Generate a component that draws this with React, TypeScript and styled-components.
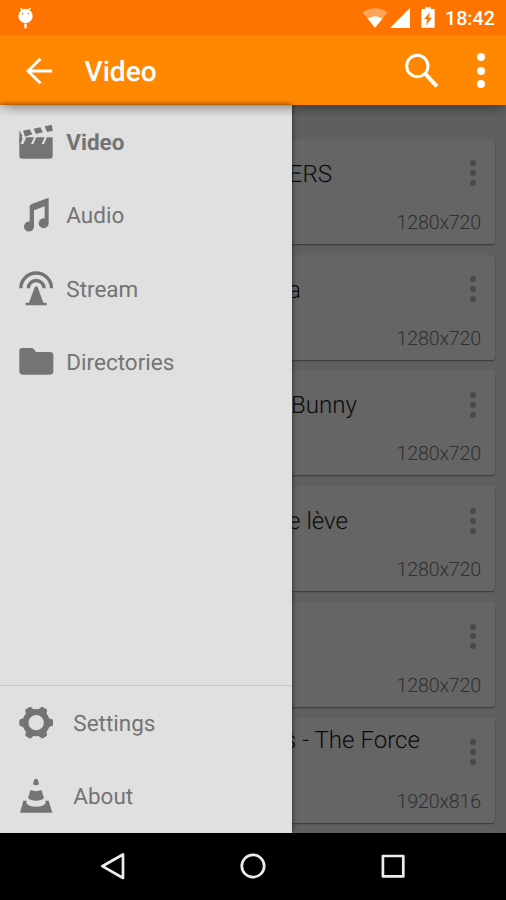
import React from "react";
import styled, { createGlobalStyle } from "styled-components";

const GlobalStyle = createGlobalStyle`
  *, *::before, *::after { box-sizing: border-box; }
  body { margin: 0; font-family: Roboto, "Noto Sans", sans-serif; background: #000; text-rendering: geometricPrecision; }
  svg { display: block; flex: none; }
`;

const Screen = styled.div`
  width: 506px;
  height: 900px;
  display: flex;
  flex-direction: column;
  overflow: hidden;
`;

const StatusBar = styled.header`
  height: 35px;
  flex: none;
  display: flex;
  align-items: center;
  padding: 0 11px 0 17px;
  background: #ff7300;
  color: #fff;
`;

const StatusIcons = styled.div`
  display: flex;
  align-items: center;
  margin-left: auto;
`;

const Clock = styled.span`
  width: 50px;
  margin-left: 10px;
  padding-top: 2px;
  font-size: 19.68px;
  line-height: 23px;
  font-weight: 500;
  white-space: nowrap;
`;

const Toolbar = styled.div`
  height: 70.4px;
  flex: none;
  display: flex;
  align-items: center;
  padding: 1px 21px 0 25px;
  background: #ff8800;
  color: #fff;
`;

const ToolbarTitle = styled.h1`
  margin: 2px auto 0 31.5px;
  font-size: 28.1px;
  line-height: 32px;
  font-weight: 500;
`;

const ToolbarActions = styled.div`
  display: flex;
  align-items: center;
  gap: 37px;
`;

const Content = styled.main`
  position: relative;
  flex: 1;
  min-height: 0;
  display: flex;
  background: #5f5f5f;

  &::after {
    content: "";
    position: absolute;
    inset: 0 0 auto 0;
    z-index: 2;
    height: 12px;
    background: linear-gradient(rgba(0, 0, 0, 0.3), rgba(0, 0, 0, 0.12) 45%, transparent);
    -webkit-mask-image: linear-gradient(90deg, rgba(0, 0, 0, 0.4), #000 14px, #000 calc(100% - 14px), rgba(0, 0, 0, 0.4));
    pointer-events: none;
  }
`;

const Drawer = styled.nav`
  width: 292.4px;
  flex: none;
  display: flex;
  flex-direction: column;
  justify-content: space-between;
  background: #e0e0e0;
  box-shadow: 0 0 5px rgba(0, 0, 0, 0.65);
  z-index: 1;
`;

const DrawerGroup = styled.div<{ $divided?: boolean }>`
  border-top: ${(p) => (p.$divided ? "1px solid #c8c8c8" : "0")};
`;

const DrawerItem = styled.a<{ $active?: boolean; $gap: number }>`
  height: 73.3px;
  display: flex;
  align-items: center;
  gap: ${(p) => p.$gap}px;
  padding-left: 18.3px;
  color: #747474;
  font-size: 22.5px;
  line-height: 28px;
  font-weight: ${(p) => (p.$active ? 700 : 400)};

  span {
    padding-top: 2px;
  }
`;

const VideoList = styled.section`
  flex: 1;
  min-width: 0;
  display: flex;
  flex-direction: column;
  gap: 10.8px;
  padding: 33.4px 11px 0 0;
  overflow: hidden;
`;

const VideoCard = styled.article`
  height: 105px;
  flex: none;
  display: flex;
  flex-direction: column;
  justify-content: space-between;
  background: #656565;
  border-radius: 0 3px 3px 0;
  box-shadow: 0 1px 1.5px rgba(0, 0, 0, 0.4);
`;

const CardHead = styled.div`
  height: 69px;
  display: flex;
  justify-content: flex-end;
  align-items: center;
  padding-right: 19px;
`;

const CardTitle = styled.h2<{ $end: number; $raised?: boolean }>`
  flex: 1;
  min-width: 0;
  display: flex;
  justify-content: flex-end;
  margin: ${(p) => (p.$raised ? "-25px" : "1px")} ${(p) => p.$end}px 0 0;
  color: #0b0b0b;
  font-size: 24.1px;
  line-height: 30px;
  font-weight: 300;
  white-space: nowrap;
`;

const Resolution = styled.span`
  align-self: flex-end;
  margin: 0 14px 9px 0;
  color: #303030;
  font-size: 19.68px;
  line-height: 25px;
  font-weight: 300;
  letter-spacing: -0.18px;
`;

const NavigationBar = styled.footer`
  height: 67.5px;
  flex: none;
  display: flex;
  align-items: center;
  justify-content: space-between;
  padding: 0 99px;
  background: #000;
`;

const VideoIcon = () => (
  <svg width="36" height="36" viewBox="0 0 108 108" fill="currentColor">
    <path d="M4 19l9 16-7 20H4zM15 20l20-4 8 15-22 7zM47 14l20-4 8 15-21 5zM80 7l21-5 4 18-18 4z" />
    <path d="M4 42h10l-6 18h8l9-20h23l-9 20h7l9-20h25l-9 20h7l9-20h17v55q0 9-9 9H13q-9 0-9-9z" />
  </svg>
);

const AudioIcon = () => (
  <svg width="36" height="36" viewBox="0 0 108 108" fill="currentColor">
    <path d="M35 29q0-6 6-8L92 2v76a15 15 0 1 1-12-14V28L48 40v49a15 15 0 1 1-13-15z" />
  </svg>
);

const StreamIcon = () => (
  <svg width="36" height="36" viewBox="0 0 108 108" fill="currentColor">
    <path d="M8.5 52a46 46 0 0 1 92 0M31 52a23.5 23.5 0 0 1 47 0" fill="none" stroke="currentColor" strokeWidth="10" />
    <path d="M50 49q4.5-6 9 0l17 46h10v8H23v-8h10z" />
  </svg>
);

const FolderIcon = () => (
  <svg width="36" height="36" viewBox="0 0 108 108" fill="currentColor">
    <path d="M12 12h28q5 0 7 3l7 9h42q10 0 10 10v48q0 10-10 10H14Q4 92 4 82V22q0-10 8-10z" />
  </svg>
);

const GEAR_TEETH = [0, 60, 120, 180, 240, 300];

const SettingsIcon = () => (
  <svg width="36" height="36" viewBox="0 0 108 108">
    <circle cx="54.5" cy="53" r="32" fill="none" stroke="currentColor" strokeWidth="18" />
    {GEAR_TEETH.map((angle) => (
      <path key={angle} transform={`rotate(${angle} 54.5 53)`} d="M84 31q6 9 15 11 6 1 6 4v14q0 3-6 4-9 2-15 11z" fill="currentColor" />
    ))}
  </svg>
);

const ConeIcon = () => (
  <svg width="36" height="36" viewBox="0 0 108 108" fill="currentColor">
    <path d="M45 18l3-11q2-5 6-5t6 5l3 11q-2 4-9 4t-9-4zM38 36q16 7 32 0l8 24q-8 8-24 8t-24-8zM16 68h10l-1 7q5 11 29 11t29-11l-1-7h10l11 36H6z" />
  </svg>
);

const BackArrow = () => (
  <svg width="28" height="28" viewBox="0 0 28 28" fill="none" stroke="currentColor" strokeWidth="2.8">
    <path d="M27 14H3M15.5 1.8L3 14l12.5 12.2" />
  </svg>
);

const SearchIcon = () => (
  <svg width="36" height="36" viewBox="0 0 108 108" fill="none" stroke="currentColor">
    <circle cx="40" cy="39" r="32" strokeWidth="9" />
    <path d="M63 62l36 38" strokeWidth="12" />
  </svg>
);

const Dots = styled.div<{ $size: number; $gap: number }>`
  display: flex;
  flex-direction: column;
  gap: ${(p) => p.$gap}px;

  i {
    width: ${(p) => p.$size}px;
    height: ${(p) => p.$size}px;
    border-radius: 50%;
    background: currentColor;
  }
`;

const CardMenu = styled(Dots)`
  color: #494949;
`;

const DebugIcon = () => (
  <svg width="17" height="22" viewBox="0 0 51 66">
    <path d="M11 3l7 9M40 3l-7 9" stroke="#fff" strokeWidth="4" fill="none" />
    <path d="M22 50h7v14h-7z" fill="#fff" />
    <circle cx="25.5" cy="27" r="21.5" fill="#fff" />
    <circle cx="17" cy="20" r="2.4" fill="#ff7300" />
    <circle cx="34" cy="20" r="2.4" fill="#ff7300" />
  </svg>
);

const WifiIcon = () => (
  <svg width="26" height="20" viewBox="0 0 78 60" fill="#fff">
    <path d="M1 13Q39-12 77 13L39 59z" opacity=".35" />
    <path d="M17 32q22-15 44 0L39 59z" />
  </svg>
);

const SignalIcon = () => (
  <svg width="20" height="20" viewBox="0 0 20 20" fill="#fff">
    <path d="M20 0v20H0z" />
  </svg>
);

const BatteryIcon = () => (
  <svg width="14" height="21" viewBox="0 0 42 63">
    <path d="M12 1h18v5h11v56H1V6h11z" fill="#fff" />
    <path d="M27 15L9 37h10l-4 18 18-23H23z" fill="#ff7300" />
  </svg>
);

const SignalGroup = styled.div`
  display: flex;
  gap: 2px;
  margin-right: 11px;
`;

const navIcon = { width: 28, height: 28, viewBox: "0 0 28 28", fill: "none", stroke: "#ededed", strokeWidth: 2.7, strokeLinejoin: "round" as const };

const VIDEOS = [
  { title: "ERS", end: 138, resolution: "1280x720" },
  { title: "a", end: 169, resolution: "1280x720" },
  { title: "Bunny", end: 113, resolution: "1280x720" },
  { title: "e lève", end: 122, resolution: "1280x720" },
  { title: "", end: 0, resolution: "1280x720" },
  { title: "s - The Force", end: 50, resolution: "1920x816", raised: true },
];

export default function App() {
  return (
    <>
      <GlobalStyle />
      <Screen>
        <StatusBar>
          <DebugIcon />
          <StatusIcons>
            <SignalGroup>
              <WifiIcon />
              <SignalIcon />
            </SignalGroup>
            <BatteryIcon />
          </StatusIcons>
          <Clock>18:42</Clock>
        </StatusBar>
        <Toolbar>
          <BackArrow />
          <ToolbarTitle>Video</ToolbarTitle>
          <ToolbarActions>
            <SearchIcon />
            <Dots $size={8} $gap={5.4}><i /><i /><i /></Dots>
          </ToolbarActions>
        </Toolbar>
        <Content>
          <Drawer>
            <DrawerGroup>
              <DrawerItem $gap={12} $active><VideoIcon /><span>Video</span></DrawerItem>
              <DrawerItem $gap={12}><AudioIcon /><span>Audio</span></DrawerItem>
              <DrawerItem $gap={12}><StreamIcon /><span>Stream</span></DrawerItem>
              <DrawerItem $gap={12}><FolderIcon /><span>Directories</span></DrawerItem>
            </DrawerGroup>
            <DrawerGroup $divided>
              <DrawerItem $gap={19}><SettingsIcon /><span>Settings</span></DrawerItem>
              <DrawerItem $gap={19}><ConeIcon /><span>About</span></DrawerItem>
            </DrawerGroup>
          </Drawer>
          <VideoList>
            {VIDEOS.map((video, index) => (
              <VideoCard key={index}>
                <CardHead>
                  <CardTitle $end={video.end} $raised={video.raised}>{video.title}</CardTitle>
                  <CardMenu $size={6} $gap={3.9}><i /><i /><i /></CardMenu>
                </CardHead>
                <Resolution>{video.resolution}</Resolution>
              </VideoCard>
            ))}
          </VideoList>
        </Content>
        <NavigationBar>
          <svg {...navIcon}><path d="M24 2.5v23.5L3.3 14.2z" /></svg>
          <svg {...navIcon}><circle cx="14" cy="14" r="11.2" /></svg>
          <svg {...navIcon}><rect x="3.9" y="4" width="20.4" height="20.4" /></svg>
        </NavigationBar>
      </Screen>
    </>
  );
}
